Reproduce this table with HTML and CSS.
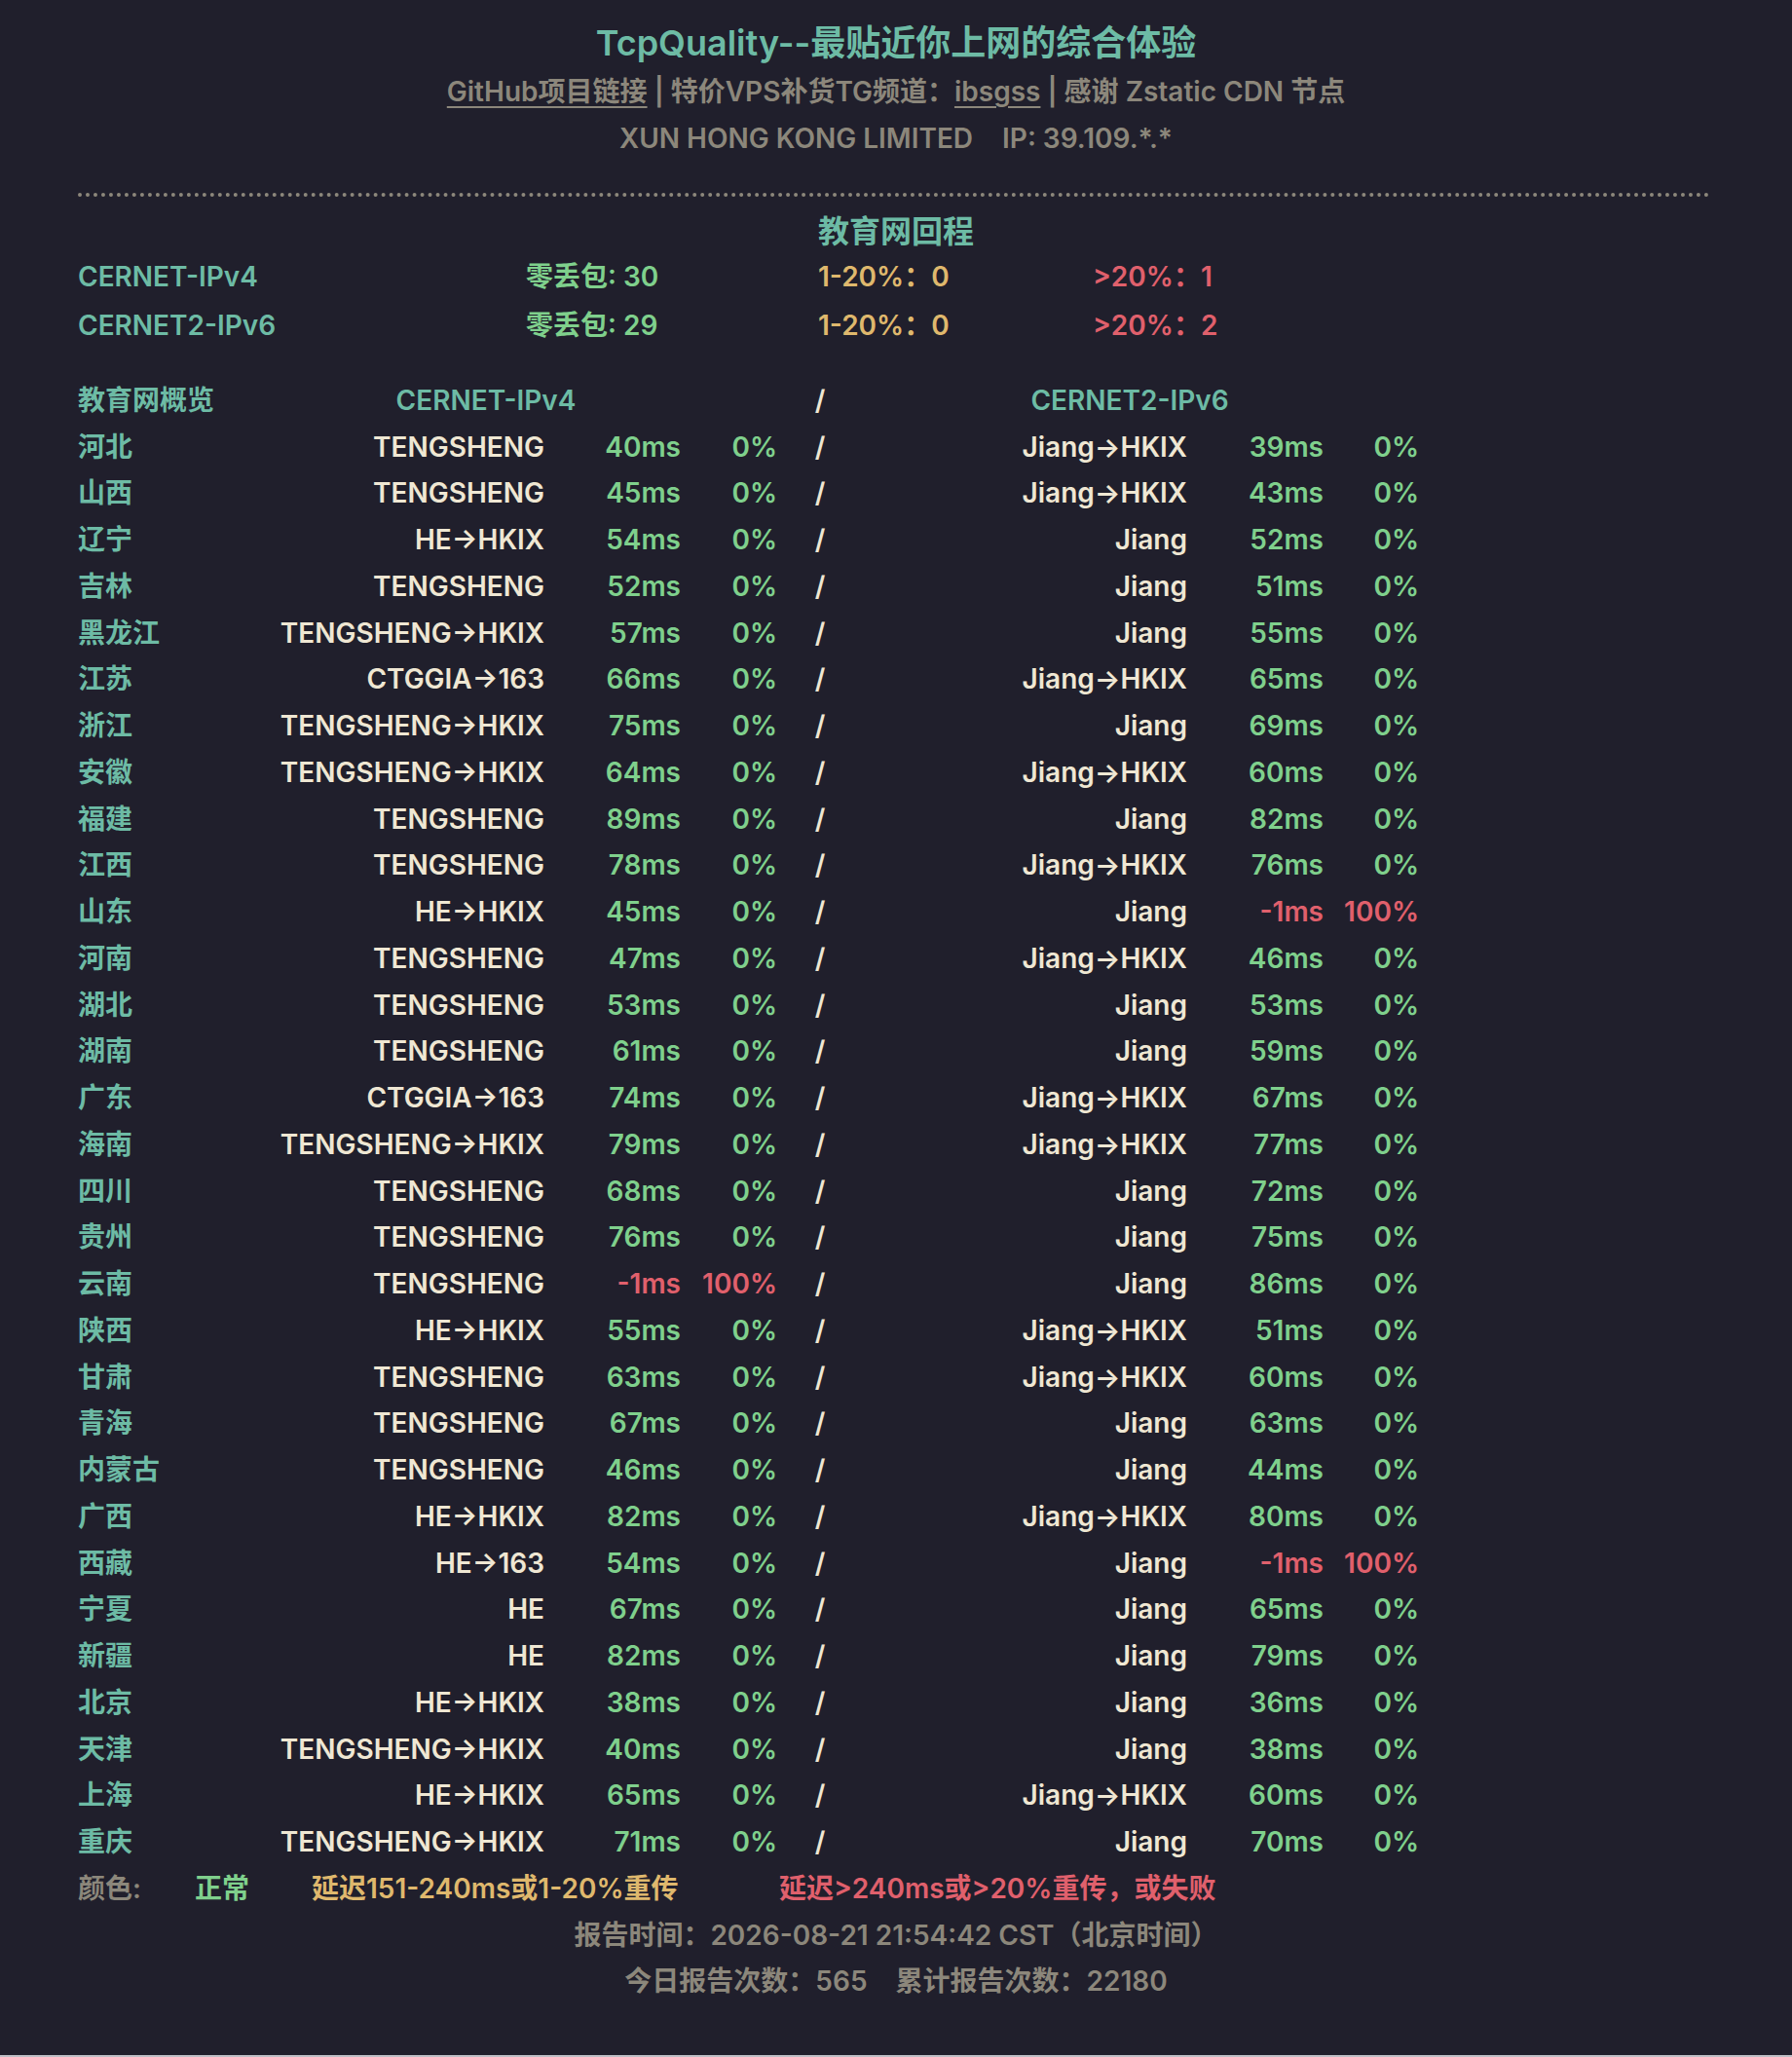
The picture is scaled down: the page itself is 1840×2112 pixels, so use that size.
FILE: index.html
```html
<!DOCTYPE html>
<html lang="zh-CN">
<head>
<meta charset="utf-8">
<title>TcpQuality</title>
<link rel="stylesheet" href="styles.css">
</head>
<body>
<div class="page">
  <header class="head">
    <h1 class="title">TcpQuality--最贴近你上网的综合体验</h1>
    <div class="links"><a class="link" href="#">GitHub项目链接</a> <span class="bar">|</span> 特价VPS补货TG频道：<a class="link" href="#">ibsgss</a> <span class="bar">|</span> 感谢 Zstatic CDN 节点</div>
    <div class="host">XUN HONG KONG LIMITED<span class="ip">IP: 39.109.*.*</span></div>
  </header>
  <div class="divider"></div>
  <h2 class="section-title">教育网回程</h2>
  <div class="stats">
    <span class="teal">CERNET-IPv4</span><span class="green">零丢包: 30</span><span class="yellow">1-20%：0</span><span class="red">&gt;20%：1</span>
    <span class="teal">CERNET2-IPv6</span><span class="green">零丢包: 29</span><span class="yellow">1-20%：0</span><span class="red">&gt;20%：2</span>
  </div>
  <div class="table">
    <div class="row thead">
      <span class="prov">教育网概览</span>
      <span class="h4">CERNET-IPv4</span>
      <span class="sl">/</span>
      <span class="h6">CERNET2-IPv6</span>
    </div>
    <div class="row"><span class="prov">河北</span><span class="rt">TENGSHENG</span><span class="ok">40ms</span><span class="ok">0%</span><span class="sl">/</span><span class="rt">Jiang→HKIX</span><span class="ok">39ms</span><span class="ok">0%</span></div>
    <div class="row"><span class="prov">山西</span><span class="rt">TENGSHENG</span><span class="ok">45ms</span><span class="ok">0%</span><span class="sl">/</span><span class="rt">Jiang→HKIX</span><span class="ok">43ms</span><span class="ok">0%</span></div>
    <div class="row"><span class="prov">辽宁</span><span class="rt">HE→HKIX</span><span class="ok">54ms</span><span class="ok">0%</span><span class="sl">/</span><span class="rt">Jiang</span><span class="ok">52ms</span><span class="ok">0%</span></div>
    <div class="row"><span class="prov">吉林</span><span class="rt">TENGSHENG</span><span class="ok">52ms</span><span class="ok">0%</span><span class="sl">/</span><span class="rt">Jiang</span><span class="ok">51ms</span><span class="ok">0%</span></div>
    <div class="row"><span class="prov">黑龙江</span><span class="rt">TENGSHENG→HKIX</span><span class="ok">57ms</span><span class="ok">0%</span><span class="sl">/</span><span class="rt">Jiang</span><span class="ok">55ms</span><span class="ok">0%</span></div>
    <div class="row"><span class="prov">江苏</span><span class="rt">CTGGIA→163</span><span class="ok">66ms</span><span class="ok">0%</span><span class="sl">/</span><span class="rt">Jiang→HKIX</span><span class="ok">65ms</span><span class="ok">0%</span></div>
    <div class="row"><span class="prov">浙江</span><span class="rt">TENGSHENG→HKIX</span><span class="ok">75ms</span><span class="ok">0%</span><span class="sl">/</span><span class="rt">Jiang</span><span class="ok">69ms</span><span class="ok">0%</span></div>
    <div class="row"><span class="prov">安徽</span><span class="rt">TENGSHENG→HKIX</span><span class="ok">64ms</span><span class="ok">0%</span><span class="sl">/</span><span class="rt">Jiang→HKIX</span><span class="ok">60ms</span><span class="ok">0%</span></div>
    <div class="row"><span class="prov">福建</span><span class="rt">TENGSHENG</span><span class="ok">89ms</span><span class="ok">0%</span><span class="sl">/</span><span class="rt">Jiang</span><span class="ok">82ms</span><span class="ok">0%</span></div>
    <div class="row"><span class="prov">江西</span><span class="rt">TENGSHENG</span><span class="ok">78ms</span><span class="ok">0%</span><span class="sl">/</span><span class="rt">Jiang→HKIX</span><span class="ok">76ms</span><span class="ok">0%</span></div>
    <div class="row"><span class="prov">山东</span><span class="rt">HE→HKIX</span><span class="ok">45ms</span><span class="ok">0%</span><span class="sl">/</span><span class="rt">Jiang</span><span class="bad">-1ms</span><span class="bad">100%</span></div>
    <div class="row"><span class="prov">河南</span><span class="rt">TENGSHENG</span><span class="ok">47ms</span><span class="ok">0%</span><span class="sl">/</span><span class="rt">Jiang→HKIX</span><span class="ok">46ms</span><span class="ok">0%</span></div>
    <div class="row"><span class="prov">湖北</span><span class="rt">TENGSHENG</span><span class="ok">53ms</span><span class="ok">0%</span><span class="sl">/</span><span class="rt">Jiang</span><span class="ok">53ms</span><span class="ok">0%</span></div>
    <div class="row"><span class="prov">湖南</span><span class="rt">TENGSHENG</span><span class="ok">61ms</span><span class="ok">0%</span><span class="sl">/</span><span class="rt">Jiang</span><span class="ok">59ms</span><span class="ok">0%</span></div>
    <div class="row"><span class="prov">广东</span><span class="rt">CTGGIA→163</span><span class="ok">74ms</span><span class="ok">0%</span><span class="sl">/</span><span class="rt">Jiang→HKIX</span><span class="ok">67ms</span><span class="ok">0%</span></div>
    <div class="row"><span class="prov">海南</span><span class="rt">TENGSHENG→HKIX</span><span class="ok">79ms</span><span class="ok">0%</span><span class="sl">/</span><span class="rt">Jiang→HKIX</span><span class="ok">77ms</span><span class="ok">0%</span></div>
    <div class="row"><span class="prov">四川</span><span class="rt">TENGSHENG</span><span class="ok">68ms</span><span class="ok">0%</span><span class="sl">/</span><span class="rt">Jiang</span><span class="ok">72ms</span><span class="ok">0%</span></div>
    <div class="row"><span class="prov">贵州</span><span class="rt">TENGSHENG</span><span class="ok">76ms</span><span class="ok">0%</span><span class="sl">/</span><span class="rt">Jiang</span><span class="ok">75ms</span><span class="ok">0%</span></div>
    <div class="row"><span class="prov">云南</span><span class="rt">TENGSHENG</span><span class="bad">-1ms</span><span class="bad">100%</span><span class="sl">/</span><span class="rt">Jiang</span><span class="ok">86ms</span><span class="ok">0%</span></div>
    <div class="row"><span class="prov">陕西</span><span class="rt">HE→HKIX</span><span class="ok">55ms</span><span class="ok">0%</span><span class="sl">/</span><span class="rt">Jiang→HKIX</span><span class="ok">51ms</span><span class="ok">0%</span></div>
    <div class="row"><span class="prov">甘肃</span><span class="rt">TENGSHENG</span><span class="ok">63ms</span><span class="ok">0%</span><span class="sl">/</span><span class="rt">Jiang→HKIX</span><span class="ok">60ms</span><span class="ok">0%</span></div>
    <div class="row"><span class="prov">青海</span><span class="rt">TENGSHENG</span><span class="ok">67ms</span><span class="ok">0%</span><span class="sl">/</span><span class="rt">Jiang</span><span class="ok">63ms</span><span class="ok">0%</span></div>
    <div class="row"><span class="prov">内蒙古</span><span class="rt">TENGSHENG</span><span class="ok">46ms</span><span class="ok">0%</span><span class="sl">/</span><span class="rt">Jiang</span><span class="ok">44ms</span><span class="ok">0%</span></div>
    <div class="row"><span class="prov">广西</span><span class="rt">HE→HKIX</span><span class="ok">82ms</span><span class="ok">0%</span><span class="sl">/</span><span class="rt">Jiang→HKIX</span><span class="ok">80ms</span><span class="ok">0%</span></div>
    <div class="row"><span class="prov">西藏</span><span class="rt">HE→163</span><span class="ok">54ms</span><span class="ok">0%</span><span class="sl">/</span><span class="rt">Jiang</span><span class="bad">-1ms</span><span class="bad">100%</span></div>
    <div class="row"><span class="prov">宁夏</span><span class="rt">HE</span><span class="ok">67ms</span><span class="ok">0%</span><span class="sl">/</span><span class="rt">Jiang</span><span class="ok">65ms</span><span class="ok">0%</span></div>
    <div class="row"><span class="prov">新疆</span><span class="rt">HE</span><span class="ok">82ms</span><span class="ok">0%</span><span class="sl">/</span><span class="rt">Jiang</span><span class="ok">79ms</span><span class="ok">0%</span></div>
    <div class="row"><span class="prov">北京</span><span class="rt">HE→HKIX</span><span class="ok">38ms</span><span class="ok">0%</span><span class="sl">/</span><span class="rt">Jiang</span><span class="ok">36ms</span><span class="ok">0%</span></div>
    <div class="row"><span class="prov">天津</span><span class="rt">TENGSHENG→HKIX</span><span class="ok">40ms</span><span class="ok">0%</span><span class="sl">/</span><span class="rt">Jiang</span><span class="ok">38ms</span><span class="ok">0%</span></div>
    <div class="row"><span class="prov">上海</span><span class="rt">HE→HKIX</span><span class="ok">65ms</span><span class="ok">0%</span><span class="sl">/</span><span class="rt">Jiang→HKIX</span><span class="ok">60ms</span><span class="ok">0%</span></div>
    <div class="row"><span class="prov">重庆</span><span class="rt">TENGSHENG→HKIX</span><span class="ok">71ms</span><span class="ok">0%</span><span class="sl">/</span><span class="rt">Jiang</span><span class="ok">70ms</span><span class="ok">0%</span></div>
  </div>
  <div class="legend">
    <span class="gray">颜色:</span><span class="green">正常</span><span class="yellow">延迟151-240ms或1-20%重传</span><span class="red">延迟&gt;240ms或&gt;20%重传，或失败</span>
  </div>
  <footer class="foot">
    <div>报告时间：2026-08-21 21:54:42 CST（北京时间）</div>
    <div>今日报告次数：565<span class="gap">累计报告次数：22180</span></div>
  </footer>
</div>
</body>
</html>
```

FILE: styles.css
```css
html {
  margin: 0;
  padding: 0;
  background: #bfbfc6;
}
body {
  margin: 0;
  padding: 0;
  background: #201f2c;
  color: #efe7d3;
  font-family: Inter, "Noto Sans CJK SC", sans-serif;
  font-weight: 600;
  font-size: 28px;
  line-height: 47.75px;
  height: 2110px;
  white-space: nowrap;
}
.page {
  width: 1680px;
  margin: 0 auto;
  padding-top: 1px;
}
.head {
  text-align: center;
  color: #8c877b;
}
.title {
  margin: 16px 0 0;
  font-size: 36px;
  line-height: 54px;
  font-weight: 600;
  color: #6dbba5;
}
.link {
  color: #8c877b;
  text-decoration: underline;
  text-decoration-thickness: 2px;
  text-underline-offset: 5px;
}
.ip {
  margin-left: 30px;
}
.divider {
  margin-top: 31px;
  width: 1676px;
  border-top: 4px dotted #8c877b;
}
.section-title {
  margin: 12px 0 0;
  text-align: center;
  font-size: 32px;
  line-height: 47.75px;
  font-weight: 600;
  color: #6dbba5;
}
.stats {
  display: grid;
  grid-template-columns: 460px 300px 282px 1fr;
  row-gap: 2px;
}
.teal { color: #6dbba5; }
.green { color: #7fd08c; }
.yellow { color: #dfb86d; }
.red { color: #e0606c; }
.gray { color: #8c877b; }
.table {
  margin-top: 29px;
}
.row {
  display: grid;
  grid-template-columns: 120px 359px 140px 99px 88px 333px 140px 98px;
  text-align: right;
}
.row .prov {
  text-align: left;
  color: #6dbba5;
}
.row .sl {
  text-align: center;
  color: #efe7d3;
}
.row .rt {
  color: #efe7d3;
}
.row .ok { color: #7fd08c; }
.row .bad { color: #e0606c; }
.thead .h4 {
  grid-column: 2 / 5;
  text-align: center;
  color: #6dbba5;
}
.thead .sl {
  grid-column: 5;
}
.thead .h6 {
  grid-column: 6 / 9;
  text-align: center;
  padding-right: 23px;
  color: #6dbba5;
}
.legend {
  display: grid;
  grid-template-columns: 120px 120px 480px 1fr;
}
.foot {
  text-align: center;
  color: #8c877b;
}
.gap {
  margin-left: 29px;
}
```
